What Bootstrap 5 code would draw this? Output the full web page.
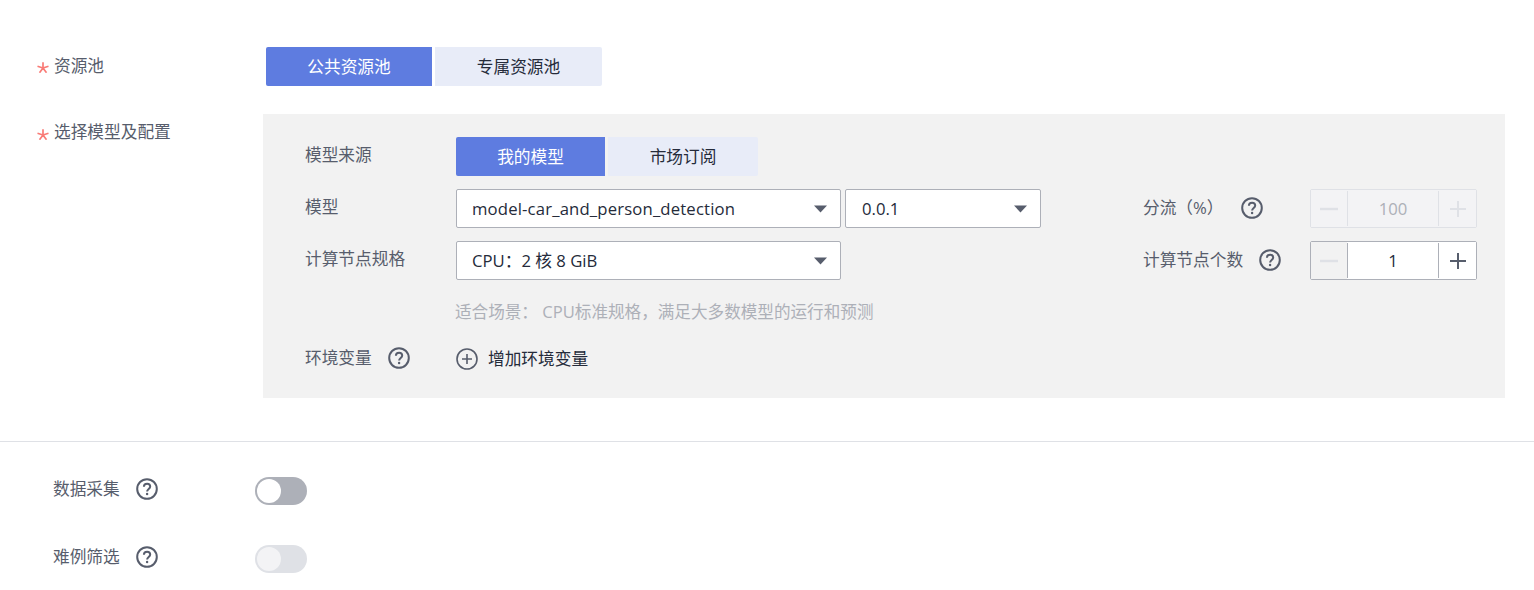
<!DOCTYPE html>
<html lang="zh-CN">
<head>
<meta charset="utf-8">
<title>部署</title>
<link href="https://cdn.jsdelivr.net/npm/bootstrap@5.3.0/dist/css/bootstrap.min.css" rel="stylesheet">
<style>
html,body{height:590px;overflow:hidden;background:#fff;}
body{font-family:"Open Sans","Noto Sans CJK SC",sans-serif;font-size:16.7px;color:#252b3a;line-height:24px;}
.top-area{padding-top:47px;height:441px;}
.form-line{display:flex;align-items:flex-start;}
.main-label{width:263px;flex:none;padding-left:37px;color:#575d6c;display:flex;}
.star{width:17px;flex:none;display:block;}
.star svg{display:block;margin-top:9px;}
.line-pool{margin-bottom:28px;}
.line-pool .main-label{padding-top:6px;}
.main-label .txt{padding-top:1px;}
.line-model .main-label{padding-top:6px;}
.line-model .main-label .txt{padding-top:0;}
.seg{display:flex;gap:3px;}
.seg-btn{height:39px;padding:1px 0 0;border:0;font-size:16.7px;line-height:38px;text-align:center;border-radius:0;color:#252b3a;background:#e8ecf8;flex:none;}
.seg-btn.on,.seg-btn.on:hover{background:#5e7ce0;color:#fff;}
.seg-btn.off:hover{background:#e8ecf8;color:#252b3a;}
.seg-btn:first-child{border-radius:2px 0 0 2px;}
.seg-btn:last-child{border-radius:0 2px 2px 0;}
.seg-pool{margin-left:3px;}
.seg-pool .seg-btn{width:166px;}
.seg-pool .seg-btn.off{width:167px;}
.seg-src .seg-btn{width:149px;}
.seg-src .seg-btn.off{width:150px;}
.panel-box{width:1242px;height:284px;background:#f2f2f2;padding:23px 28px 0 42px;flex:none;}
.sub-row{display:flex;align-items:flex-start;margin-bottom:13px;height:39px;}
.sub-label{width:151px;flex:none;color:#575d6c;padding-top:6px;display:flex;align-items:center;}
.pick{height:39px;background:#fff;border:1px solid #adb0b8;border-radius:2px;display:flex;align-items:center;justify-content:space-between;padding:0 13px 0 15px;color:#252b3a;}
.pick-w{width:385px;}
.pick-w .model-name{letter-spacing:.16px;}
.pick-v{width:196px;margin-left:4px;padding-left:16px;}
.right-group{margin-left:auto;display:flex;align-items:flex-start;width:334px;}
.right-label{width:167px;flex:none;color:#575d6c;padding-top:7px;display:flex;align-items:center;}
.help{width:22px;height:22px;flex:none;display:block;}
.stepper{width:167px;height:39px;border:1px solid #adb0b8;border-radius:2px;display:flex;background:#fff;}
.stepper>div{display:flex;align-items:center;justify-content:center;}
.st-btn{width:36px;background:#f2f2f2;flex:none;}
.st-btn.st-plus{width:37px;}
.st-num{flex:1;border-left:1px solid #adb0b8;border-right:1px solid #adb0b8;margin:1px 0;}
.stepper.dis{border-color:#dfe1e6;background:#f3f3f5;color:#adb0b8;}
.stepper.dis .st-btn{background:#f3f3f5;}
.stepper.dis .st-num{border-color:#dfe1e6;}
.hint-row{margin-left:150px;color:#adb0b8;height:24px;margin-top:-1px;margin-bottom:22px;padding-top:8px;line-height:24px;box-sizing:content-box;font-size:16.6px;}
.env-row{display:flex;align-items:center;height:24px;}
.env-row .sub-label{padding-top:0;}
.add-link{display:flex;align-items:center;color:#252b3a;gap:10px;margin-top:1px;}
.lower{border-top:1px solid #dfe1e6;padding-top:35px;}
.tog-row{display:flex;align-items:flex-start;height:28px;margin-bottom:40px;padding-left:53px;}
.tog-label{width:202px;flex:none;color:#575d6c;display:flex;align-items:center;}
.tog{width:52px;height:28px;border-radius:14px;background:#adb0b8;display:flex;align-items:center;padding-left:2px;}
.tog i{display:block;width:24px;height:24px;border-radius:50%;background:#fff;}
.tog.dis{background:#dfe1e6;}
.tog.dis i{background:#f3f3f5;}
.lbl-gap{margin-left:17px;}
.lbl-gap2{margin-left:16px;}
</style>
</head>
<body>
<svg width="0" height="0" class="position-absolute">
<defs>
<symbol id="q" viewBox="0 0 22 22"><circle cx="11" cy="11" r="9.8" fill="none" stroke="#575d6c" stroke-width="2"/><path d="M7.9 8.7c0-1.8 1.4-3 3.2-3s3.1 1.1 3.1 2.8c0 2.4-3.1 2.5-3.1 5" fill="none" stroke="#575d6c" stroke-width="2"/><circle cx="11.1" cy="16" r="1.2" fill="#575d6c"/></symbol>
<symbol id="ast" viewBox="0 0 12 11"><path d="M6 6V0.3M6 6L0.5 4.2M6 6L2.5 10.7M6 6L9.5 10.7M6 6L11.5 4.2" fill="none" stroke="#f97b76" stroke-width="1.7"/></symbol>
<symbol id="caret" viewBox="0 0 13 8"><path d="M0 0.5h13L6.5 7.5z" fill="#575d6c"/></symbol>
</defs>
</svg>
<div class="top-area">
  <div class="form-line line-pool">
    <div class="main-label"><span class="star"><svg width="12" height="11"><use href="#ast"/></svg></span><span class="txt">资源池</span></div>
    <div class="seg seg-pool">
      <button class="btn seg-btn on" type="button">公共资源池</button>
      <button class="btn seg-btn off" type="button">专属资源池</button>
    </div>
  </div>
  <div class="form-line line-model">
    <div class="main-label"><span class="star"><svg width="12" height="11"><use href="#ast"/></svg></span><span class="txt">选择模型及配置</span></div>
    <div class="panel-box">
      <div class="sub-row">
        <div class="sub-label">模型来源</div>
        <div class="seg seg-src">
          <button class="btn seg-btn on" type="button">我的模型</button>
          <button class="btn seg-btn off" type="button">市场订阅</button>
        </div>
      </div>
      <div class="sub-row">
        <div class="sub-label">模型</div>
        <div class="pick pick-w"><span class="model-name">model-car_and_person_detection</span><svg width="13" height="8"><use href="#caret"/></svg></div>
        <div class="pick pick-v"><span>0.0.1</span><svg width="13" height="8"><use href="#caret"/></svg></div>
        <div class="right-group">
          <div class="right-label"><span>分流（%）</span><svg class="help lbl-gap"><use href="#q"/></svg></div>
          <div class="stepper dis">
            <div class="st-btn"><svg width="18" height="18" viewBox="0 0 18 18"><path d="M0 9h18" stroke="#dfe1e6" stroke-width="2.4"/></svg></div>
            <div class="st-num">100</div>
            <div class="st-btn st-plus"><svg width="18" height="18" viewBox="0 0 18 18"><path d="M1 9h16M9 1v16" stroke="#dfe1e6" stroke-width="2"/></svg></div>
          </div>
        </div>
      </div>
      <div class="sub-row">
        <div class="sub-label">计算节点规格</div>
        <div class="pick pick-w"><span>CPU：2 核 8 GiB</span><svg width="13" height="8"><use href="#caret"/></svg></div>
        <div class="right-group">
          <div class="right-label"><span>计算节点个数</span><svg class="help lbl-gap2"><use href="#q"/></svg></div>
          <div class="stepper">
            <div class="st-btn"><svg width="18" height="18" viewBox="0 0 18 18"><path d="M0 9h18" stroke="#dfe1e6" stroke-width="2.4"/></svg></div>
            <div class="st-num">1</div>
            <div class="st-btn st-plus bg-white"><svg width="18" height="18" viewBox="0 0 18 18"><path d="M1 9h16M9 1v16" stroke="#575d6c" stroke-width="2"/></svg></div>
          </div>
        </div>
      </div>
      <div class="hint-row">适合场景： CPU标准规格，满足大多数模型的运行和预测</div>
      <div class="env-row">
        <div class="sub-label"><span>环境变量</span><svg class="help lbl-gap2"><use href="#q"/></svg></div>
        <div class="add-link"><svg width="22" height="22" viewBox="0 0 22 22"><circle cx="11" cy="11" r="10" fill="none" stroke="#575d6c" stroke-width="1.6"/><path d="M6 11h10M11 6v10" stroke="#575d6c" stroke-width="1.6"/></svg><span>增加环境变量</span></div>
      </div>
    </div>
  </div>
</div>
<div class="lower">
  <div class="tog-row">
    <div class="tog-label"><span>数据采集</span><svg class="help lbl-gap2"><use href="#q"/></svg></div>
    <div class="tog"><i></i></div>
  </div>
  <div class="tog-row">
    <div class="tog-label"><span>难例筛选</span><svg class="help lbl-gap2"><use href="#q"/></svg></div>
    <div class="tog dis"><i></i></div>
  </div>
</div>
<script src="https://cdn.jsdelivr.net/npm/bootstrap@5.3.0/dist/js/bootstrap.bundle.min.js"></script>
</body>
</html>
